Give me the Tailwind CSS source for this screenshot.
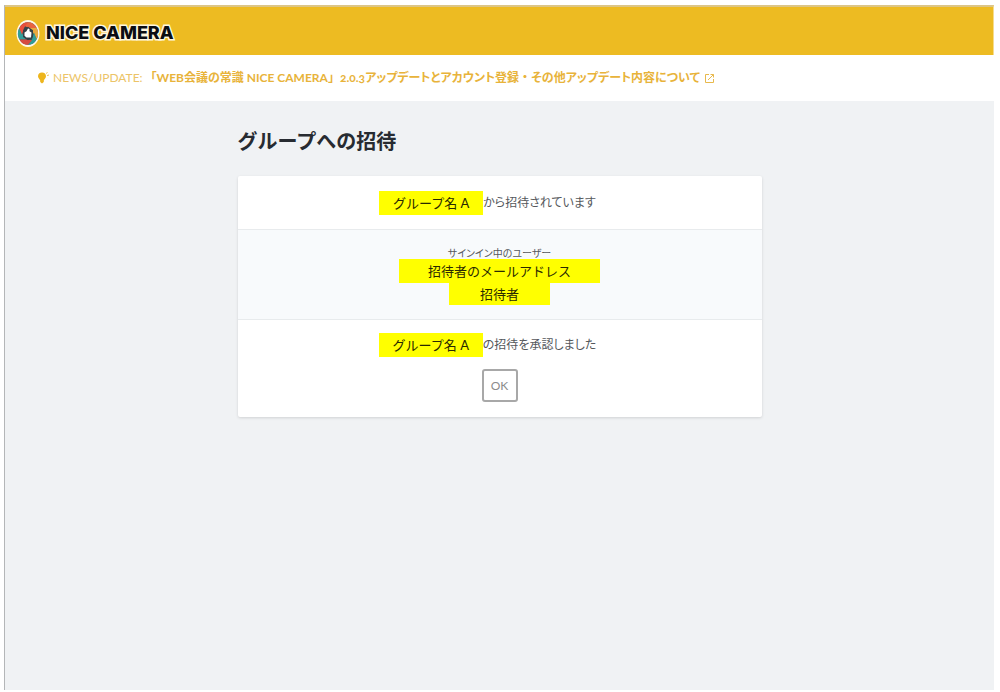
<!DOCTYPE html>
<html lang="ja">
<head>
<meta charset="utf-8">
<meta name="viewport" content="width=device-width, initial-scale=1">
<title>NICE CAMERA</title>
<script src="https://cdn.jsdelivr.net/npm/@tailwindcss/browser@4"></script>
</head>
<body class="flex min-h-screen flex-col bg-white pt-[5px] pr-[6px] pb-[2px] pl-1 font-['Lato','Noto_Sans_CJK_JP',sans-serif] text-xs text-[#55585c]">
<div class="flex grow flex-col border-l border-[#b4b6b8] bg-[#f0f2f4]">
  <header class="flex h-[50px] items-center border-t-2 border-r border-t-[#dcc587] border-r-[#f6dc8d] bg-[#edbb22] px-[11px] pt-1">
    <a href="#" class="flex items-center gap-[6px]">
      <svg class="h-[27px] w-6" viewBox="0 0 24 24" preserveAspectRatio="none" aria-hidden="true">
        <ellipse cx="12" cy="12" rx="11.500" ry="12" fill="#fff8e8"/>
        <circle cx="12" cy="12" r="10" fill="#38454b"/>
        <path d="M12 2A10 10 0 0 1 20.7 7L13 7L8 5Z" fill="#e9653f"/>
        <path d="M20.7 7A10 10 0 0 1 20.7 17L17 11L13 7Z" fill="#e9a83e"/>
        <path d="M20.7 17A10 10 0 0 1 12 22L16 17L18 11Z" fill="#2f9c98"/>
        <path d="M12 22A10 10 0 0 1 3.3 17L10 17L16 18Z" fill="#d64b3f"/>
        <path d="M3.3 17A10 10 0 0 1 3.3 7L7 13L10 17Z" fill="#329f9a"/>
        <path d="M3.3 7A10 10 0 0 1 12 2L8 7L6 13Z" fill="#e84f3d"/>
        <path d="M12 6L17 9V15L12 18L7 15V9Z" fill="#344047"/>
        <path d="M8.500 11L10.500 10L12 7.500L13.500 8V10L15.500 11L15 15.500H10.500L8.500 14Z" fill="#fff"/>
      </svg>
      <span class="font-['Inter',sans-serif] text-lg font-extrabold text-[#0b0d12] [paint-order:stroke_fill] [-webkit-text-stroke:3px_#fff7df]">NICE CAMERA</span>
    </a>
  </header>
  <div class="flex h-[46px] items-center bg-white px-8 text-[#e8b33a]">
    <a href="#" class="flex items-center whitespace-nowrap">
      <svg class="mr-1 h-3 w-3" viewBox="0 0 12 12" aria-hidden="true">
        <path d="M5 .5C2.500 .5 1 2.200 1 4.300C1 6 2.700 7 3.200 8.500V10L5 11.500L6.800 10V8.500C7.300 7 9 6 9 4.300C9 2.200 7.500 .5 5 .5Z" fill="#edb51c"/>
        <path d="M9 1.500L10.500 .5M10 3.500L12 3" stroke="#edc45b" fill="none"/>
      </svg>
      <span class="mr-2 text-[#ecc468]">NEWS/UPDATE:</span>
      <span class="font-bold [font-feature-settings:'palt','onum']">「WEB会議の常識 NICE CAMERA<span class="[font-feature-settings:normal]">」</span>2.0.3アップデートとアカウント登録<span class="[font-feature-settings:normal]">・</span>その他アップデート内容について</span>
      <svg class="ml-1 size-[11px]" viewBox="0 0 11 11" fill="none" stroke="#e8b94d" aria-hidden="true"><path d="M5 1.500H1.500V9.500H9.500V6M6.500 1.500H9.500V4.500M9.500 1.500L4 7"/></svg>
    </a>
  </div>
  <main class="mx-auto w-full max-w-[524px] pt-[25px]">
    <h1 class="mb-5 text-xl leading-[30px] font-bold text-[#272b31]">グループへの招待</h1>
    <section class="rounded-xs bg-white text-center shadow-[0_1px_3px_#0002]">
      <p class="flex h-[53px] items-center justify-center pr-6">
        <mark class="w-[104px] bg-[#ffff00] text-[13px] leading-6 text-[#292900]">グループ名 A</mark><span class="[font-feature-settings:'palt']">から招待されています</span>
      </p>
      <div class="flex h-[91px] flex-col items-center border-y border-[#e8ebed] bg-[#f8fafc] pt-[17px]">
        <span class="text-[10px] leading-3 [font-feature-settings:'palt']">サインイン中のユーザー</span>
        <mark class="w-[201px] bg-[#ffff00] text-[13px] leading-6 text-[#292900]">招待者のメールアドレス</mark>
        <mark class="w-[101px] bg-[#ffff00] text-[13px] leading-[22px] text-[#292900]">招待者</mark>
      </div>
      <div class="pt-[13px] pb-[15px]">
        <p class="flex items-center justify-center pr-6">
          <mark class="w-[104px] bg-[#ffff00] text-[13px] leading-6 text-[#292900]">グループ名 A</mark><span class="[font-feature-settings:'palt']">の招待を承認しました</span>
        </p>
        <button type="button" class="mt-3 h-[33px] w-9 rounded-[3px] border-2 border-[#a8a8a8] bg-white text-xs text-[#8c8c8c]">OK</button>
      </div>
    </section>
  </main>
</div>
</body>
</html>
